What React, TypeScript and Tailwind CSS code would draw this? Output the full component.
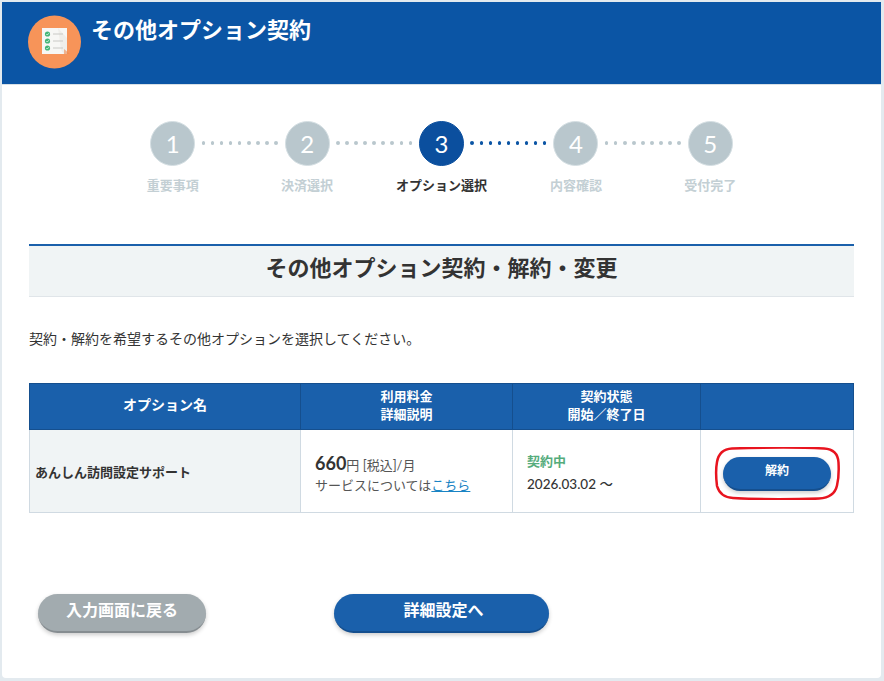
const FONT = "font-['Lato','Noto_Sans_CJK_JP',sans-serif]";

const STEPS = ["重要事項", "決済選択", "オプション選択", "内容確認", "受付完了"];
const CURRENT_STEP = 3;

function ChecklistIcon() {
    return (
        <svg viewBox="0 0 53 54" className="w-[53px] h-[54px] shrink-0">
            <circle cx="26.5" cy="27" r="26.5" fill="#f79459" />
            <path d="M14 13h25v26H14z" fill="#f7f7f5" />
            <path d="M30 13l9 10v16h-3l-3-4z" fill="#efeeea" />
            <path d="M36 34l6 5h-6z" fill="#ec8a50" opacity="0.6" />
            {[19, 26, 33].map((cy) => (
                <g key={cy}>
                    <circle cx="19.500" cy={cy} r="2.600" fill="#46b678" />
                    <path d={`M18.300 ${cy}l1 1 1.600-1.800`} stroke="#fff" strokeWidth="0.7" fill="none" />
                    <path d={`M25 ${cy}h10`} stroke="#c9c9c6" strokeWidth="1" />
                </g>
            ))}
        </svg>
    );
}

function Dots({ active }: { active: boolean }) {
    return (
        <div className="absolute left-[calc(50%+29px)] top-[20px] flex w-[76px] justify-between">
            {Array.from({ length: 9 }).map((_, i) => (
                <span
                    key={i}
                    className={`w-[3.5px] h-[3.5px] rounded-full ${active ? "bg-[#0b55a5]" : "bg-[#b9c7cd]"}`}
                />
            ))}
        </div>
    );
}

function Stepper() {
    return (
        <div className="mx-auto mt-[36px] grid w-[672px] grid-cols-5">
            {STEPS.map((label, i) => {
                const current = i + 1 === CURRENT_STEP;
                return (
                    <div key={label} className="relative flex flex-col items-center">
                        <div
                            className={`flex w-[45px] h-[45px] items-center justify-center rounded-full border text-[24px] leading-none text-white ${
                                current ? "bg-[#0b4f9e] border-[#0b4f9e]" : "bg-[#b9c7cd] border-[#d5dfe3]"
                            }`}
                        >
                            {i + 1}
                        </div>
                        {i < STEPS.length - 1 && <Dots active={current} />}
                        <p
                            className={`mt-[9px] text-[13px] leading-[20px] font-bold whitespace-nowrap ${
                                current ? "text-[#333]" : "text-[#c3cfd4]"
                            }`}
                        >
                            {label}
                        </p>
                    </div>
                );
            })}
        </div>
    );
}

function OptionTable() {
    return (
        <table className="mt-[34px] w-[825px] table-fixed border-collapse text-[13px] leading-[18px]">
            <thead>
                <tr className="h-[46px] bg-[#1a60ab] text-white font-bold">
                    <th className="w-[271px] border border-[#154f8e] pb-[4px] text-[14px]">オプション名</th>
                    <th className="w-[212px] border border-[#154f8e] pb-[4px]">
                        利用料金
                        <br />
                        詳細説明
                    </th>
                    <th className="w-[188px] border border-[#154f8e] pb-[4px]">
                        契約状態
                        <br />
                        開始／終了日
                    </th>
                    <th className="border border-[#154f8e]" />
                </tr>
            </thead>
            <tbody>
                <tr className="h-[83px]">
                    <td className="border border-[#d0dae2] bg-[#f0f4f5] px-[5px] pt-[2px] font-bold text-[#333]">
                        あんしん訪問設定サポート
                    </td>
                    <td className="border border-[#d0dae2] pl-[14px] pt-[5px] text-[#555]">
                        <div className="leading-[20px]">
                            <span className="text-[18px] font-bold text-[#333]">660</span>円 [税込]/月
                        </div>
                        <div className="leading-[20px]">
                            サービスについては
                            <a href="#" className="text-[#1a84c4] underline">
                                こちら
                            </a>
                        </div>
                    </td>
                    <td className="border border-[#d0dae2] pl-[14px] pt-[4px]">
                        <div className="font-bold text-[#55ac7c] leading-[18px]">契約中</div>
                        <div className="mt-[4px] text-[13.500px] font-medium text-[#333] leading-[20px]">
                            2026.03.02 〜
                        </div>
                    </td>
                    <td className="border border-[#d0dae2] pt-[5px]">
                        <div className="relative mx-auto flex w-[108px] justify-center">
                            <button className="h-[34px] w-[108px] rounded-full border-b-2 border-[#154f8e] bg-[#1a60ab] pb-[3px] text-[12px] font-bold text-white shadow-[0_2px_4px_rgba(0,0,0,0.2)]">
                                解約
                            </button>
                            {/* red annotation drawn over the button */}
                            <svg
                                viewBox="0 0 126 53"
                                className="absolute left-[-9px] top-[-10px] w-[126px] h-[53px] pointer-events-none"
                            >
                                <path
                                    d="M18 1.500C50 .5 90 .5 110 1.500c9 .5 14 5 14.500 14 .5 9 .5 15-1.500 23-2 9-9 12.500-18 13-28 1-60 1-86-.5-9-.5-14-5-16-12-1-8-1.500-16 0-24C4.500 6 10 2 18 1.500z"
                                    fill="none"
                                    stroke="#e8141f"
                                    strokeWidth="2.500"
                                />
                            </svg>
                        </div>
                    </td>
                </tr>
            </tbody>
        </table>
    );
}

export default function App() {
    return (
        <div className={`${FONT} h-[681px] w-[884px] overflow-hidden bg-[#e3eaef] pl-[2px] pt-[2px]`}>
            <div className="h-[676px] w-[879px] overflow-hidden rounded-b-[4px] bg-white">
                <header className="flex h-[83px] items-start gap-[10px] border-b border-[#d8e0e6] bg-[#0b55a5] pl-[26px] pt-[13px]">
                    <ChecklistIcon />
                    <h1 className="text-[22px] font-bold leading-[30px] text-white">その他オプション契約</h1>
                </header>

                <Stepper />

                <div className="px-[27px]">
                    <h2 className="mt-[49px] flex h-[53px] w-[825px] items-center justify-center border-t-2 border-b border-t-[#1a60ab] border-b-[#e0e5e9] bg-[#f0f4f5] pb-[7px] text-[22px] font-bold text-[#333]">
                        その他オプション契約・解約・変更
                    </h2>
                    <p className="mt-[32px] text-[14px] leading-[20px] text-[#333]">
                        契約・解約を希望するその他オプションを選択してください。
                    </p>
                    <OptionTable />

                    <div className="mt-[81px] flex items-start pl-[9px]">
                        <button className="h-[39px] w-[168px] rounded-full border-b-2 border-[#868d91] bg-[#a2abaf] pb-[5px] text-[16px] font-bold text-white shadow-[0_2px_4px_rgba(0,0,0,0.2)]">
                            入力画面に戻る
                        </button>
                        <button className="ml-[128px] h-[39px] w-[215px] rounded-full border-b-2 border-[#154f8e] bg-[#1a60ab] pb-[5px] pl-[4px] text-[16px] font-bold text-white shadow-[0_2px_4px_rgba(0,0,0,0.2)]">
                            詳細設定へ
                        </button>
                    </div>
                </div>
            </div>
        </div>
    );
}
